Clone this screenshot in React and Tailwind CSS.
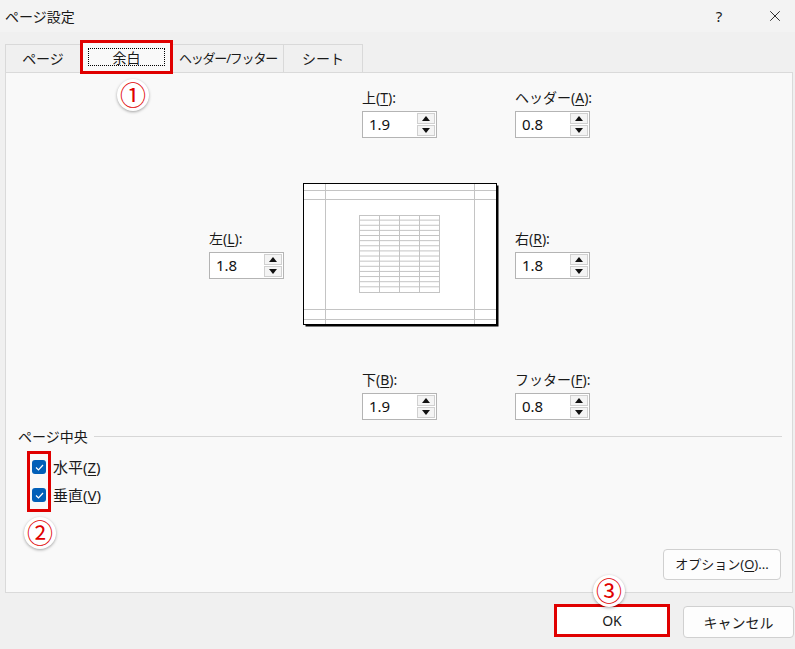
import { X } from "lucide-react";

function Arrow({ up }) {
  return (
    <svg width="8" height="5" viewBox="0 0 8 5">
      {up ? <path d="M0 5 L4 0 L8 5 Z" fill="#111" /> : <path d="M0 0 L8 0 L4 5 Z" fill="#111" />}
    </svg>
  );
}

function Spin({ label, u, value }) {
  return (
    <div className="w-[75px]">
      <div className="h-[20px] leading-[20px] mb-[3px] text-[14px] text-[#1a1a1a] whitespace-nowrap">
        {label}(<span className="underline underline-offset-2">{u}</span>):
      </div>
      <div className="h-[27px] border border-[#b4b4b4] bg-white flex items-center">
        <span className="flex-1 pl-[6px] text-[15px] text-[#111]">{value}</span>
        <div className="flex flex-col gap-[1px] mr-[1px]">
          <div className="w-[18px] h-[11px] border border-[#d0d0d0] bg-[#f4f4f4] flex items-center justify-center">
            <Arrow up />
          </div>
          <div className="w-[18px] h-[11px] border border-[#d0d0d0] bg-[#f4f4f4] flex items-center justify-center">
            <Arrow />
          </div>
        </div>
      </div>
    </div>
  );
}

function Preview() {
  const rows = [];
  for (let i = 1; i < 15; i++) {
    const y = 32 + i * 5.13;
    rows.push(<line key={i} x1="56" y1={y} x2="136" y2={y} stroke="#c4c4c4" strokeWidth="1" />);
  }
  return (
    <svg width="196" height="145" viewBox="0 0 196 145" className="shrink-0">
      <rect x="2.5" y="2.5" width="193" height="141" fill="#000" />
      <rect x="0.5" y="0.5" width="193" height="141" fill="#fff" stroke="#000" />
      <g stroke="#c4c4c4" strokeWidth="1">
        <line x1="22.5" y1="1" x2="22.5" y2="141" />
        <line x1="171.5" y1="1" x2="171.5" y2="141" />
        <line x1="1" y1="7.5" x2="193" y2="7.5" />
        <line x1="1" y1="16.5" x2="193" y2="16.5" />
        <line x1="1" y1="126.5" x2="193" y2="126.5" />
        <line x1="1" y1="136.5" x2="193" y2="136.5" />
        <rect x="56.5" y="32.5" width="80" height="77" fill="none" />
        <line x1="76.5" y1="32" x2="76.5" y2="110" />
        <line x1="96.5" y1="32" x2="96.5" y2="110" />
        <line x1="116.5" y1="32" x2="116.5" y2="110" />
      </g>
      {rows}
    </svg>
  );
}

function Check() {
  return (
    <div className="w-[14px] h-[14px] rounded-[3px] bg-[#005fb8] flex items-center justify-center">
      <svg width="9" height="7" viewBox="0 0 9 7">
        <path d="M1 3.5 L3.5 6 L8 1" fill="none" stroke="#fff" strokeWidth="1.2" />
      </svg>
    </div>
  );
}

function Marker({ n, className }) {
  return (
    <div
      className={
        "absolute w-[32px] h-[32px] rounded-full bg-white shadow-[0_1px_3px_rgba(0,0,0,0.35)] flex items-center justify-center text-[#e00000] text-[26px] leading-none " +
        className
      }
    >
      {n}
    </div>
  );
}

export default function App() {
  return (
    <div className="relative w-[795px] h-[649px] bg-[#f0f0f0] overflow-hidden font-['Noto_Sans','Noto_Sans_CJK_JP',sans-serif] text-[#1a1a1a]">
      {/* title bar */}
      <div className="h-[32px] bg-[#f3f3f3] flex items-center pl-[5px]">
        <span className="text-[14px] flex-1">ページ設定</span>
        <span className="text-[15px] w-[20px] text-center mr-[37px]">?</span>
        <X size={18} strokeWidth={1.2} className="mr-[11px]" />
      </div>

      {/* tabs */}
      <div className="flex items-end h-[32px] mt-[8px] pl-[5px] text-[14px]">
        <div className="w-[75px] h-[28px] border-l border-t border-[#d9d9d9] bg-[#f0f0f0] flex items-center justify-center">
          ページ
        </div>
        <div className="relative z-10 w-[93px] h-[34px] -mb-[2px] border-[3px] border-[#e00000] bg-[#f9f9f9] p-[5px]">
          <div className="h-full border border-dotted border-black flex items-center justify-center">余白</div>
        </div>
        <div className="w-[111px] h-[28px] border-t border-r border-[#d9d9d9] bg-[#f0f0f0] flex items-center justify-center whitespace-nowrap text-[13px] tracking-[-1.2px]">
          ヘッダー/フッター
        </div>
        <div className="w-[79px] h-[28px] border-t border-r border-[#d9d9d9] bg-[#f0f0f0] flex items-center justify-center">
          シート
        </div>
      </div>

      {/* panel */}
      <div className="ml-[5px] w-[788px] h-[521px] border border-[#dadada] bg-[#f9f9f9] flex flex-col">
        <div className="flex pl-[356px] pt-[15px] gap-[78px]">
          <Spin label="上" u="T" value="1.9" />
          <Spin label="ヘッダー" u="A" value="0.8" />
        </div>

        <div className="flex items-start pl-[203px] mt-[45px]">
          <div className="mt-[46px]">
            <Spin label="左" u="L" value="1.8" />
          </div>
          <div className="ml-[19px]">
            <Preview />
          </div>
          <div className="ml-[16px] mt-[46px]">
            <Spin label="右" u="R" value="1.8" />
          </div>
        </div>

        <div className="flex pl-[356px] mt-[42px] gap-[78px]">
          <Spin label="下" u="B" value="1.9" />
          <Spin label="フッター" u="F" value="0.8" />
        </div>

        <div className="flex items-center mt-[6px] pl-[12px] pr-[10px] h-[20px] text-[14px]">
          <span className="mr-[6px]">ページ中央</span>
          <div className="flex-1 h-px bg-[#d7d7d7]" />
        </div>

        <div className="relative mt-[7px] pl-[26px] text-[15px]">
          <div className="flex items-center h-[28px] gap-[7px]">
            <Check />
            <span>
              水平(<span className="underline underline-offset-2">Z</span>)
            </span>
          </div>
          <div className="flex items-center h-[28px] gap-[7px]">
            <Check />
            <span>
              垂直(<span className="underline underline-offset-2">V</span>)
            </span>
          </div>
          <div className="absolute left-[21px] top-[-2px] w-[24px] h-[61px] border-[3px] border-[#e00000]" />
        </div>

        <div className="flex justify-end mt-[40px] pr-[11px]">
          <div className="w-[118px] h-[31px] rounded-[4px] border border-[#d0d0d0] bg-[#fdfdfd] flex items-center justify-center text-[13px]">
            オプション(<span className="underline underline-offset-2">O</span>)...
          </div>
        </div>
      </div>

      {/* footer */}
      <div className="flex justify-end items-start mt-[11px] pr-[1px] gap-[13px]">
        <div className="w-[116px] h-[33px] border-[3px] border-[#e00000] bg-white flex items-center justify-center text-[14px]">
          OK
        </div>
        <div className="mt-[2px] w-[111px] h-[32px] rounded-[4px] border border-[#d0d0d0] bg-[#fdfdfd] flex items-center justify-center text-[14px]">
          キャンセル
        </div>
      </div>

      <Marker n="①" className="left-[117px] top-[79px]" />
      <Marker n="②" className="left-[24px] top-[517px]" />
      <Marker n="③" className="left-[593px] top-[575px]" />
    </div>
  );
}
